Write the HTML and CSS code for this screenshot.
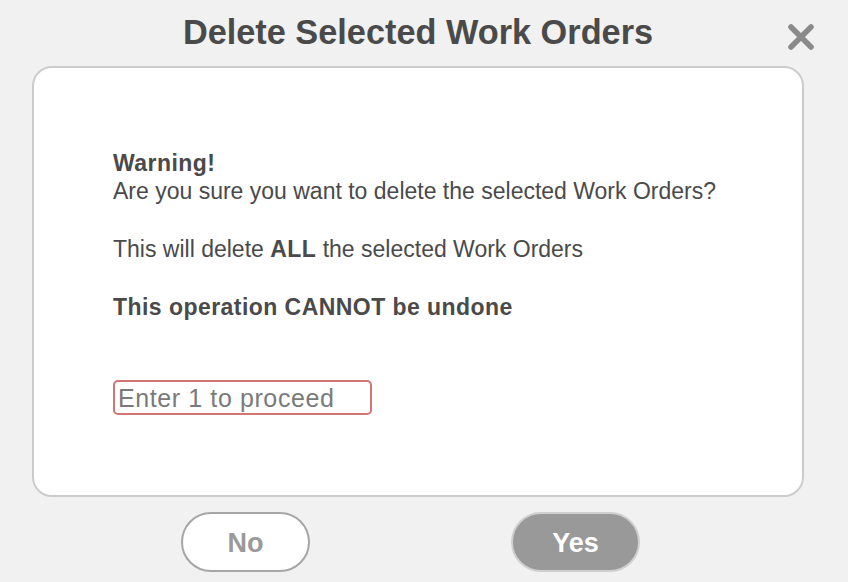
FILE: index.html
```html
<!DOCTYPE html>
<html lang="en">
<head>
  <meta charset="UTF-8">
  <meta name="viewport" content="width=device-width, initial-scale=1.0">
  <title>Delete Selected Work Orders</title>
  <link rel="stylesheet" href="styles.css">
</head>
<body>
  <div class="modal">
    <!-- Cabecera -->
    <div class="modal-header">
      <h1>Delete Selected Work Orders</h1>
      <button type="button" class="close" aria-label="Close">
        <svg width="30" height="30" viewBox="0 0 30 30">
          <path d="M5 5 L25 25 M25 5 L5 25" stroke="#8a8a8a" stroke-width="5.5" stroke-linecap="round"/>
        </svg>
      </button>
    </div>

    <!-- Contenido -->
    <div class="modal-body">
      <p class="warning"><strong>Warning!</strong><br>Are you sure you want to delete the selected Work Orders?</p>
      <p>This will delete <strong>ALL</strong> the selected Work Orders</p>
      <p><strong>This operation CANNOT be undone</strong></p>
      <input type="text" class="confirm-input" placeholder="Enter 1 to proceed">
    </div>

    <!-- Botones -->
    <div class="modal-actions">
      <button type="button" class="btn btn-no">No</button>
      <button type="button" class="btn btn-yes">Yes</button>
    </div>
  </div>
</body>
</html>
```

FILE: styles.css
```css
body {
  margin: 0;
  padding: 0;
  background-color: #f1f1f1;
  font-family: "Liberation Sans", Arial, sans-serif;
  color: #4a4a4a;
}

.modal {
  width: 772px;
  margin-left: 32px;
}

.modal-header {
  position: relative;
  height: 66px;
}

.modal-header h1 {
  margin: 0;
  padding-top: 12px;
  text-align: center;
  font-size: 34.3px;
  line-height: 40px;
  font-weight: bold;
  color: #4a4a4a;
}

.close {
  position: absolute;
  top: 22px;
  right: -12px;
  padding: 0;
  border: none;
  background: none;
  cursor: pointer;
}

.modal-body {
  height: 431px;
  box-sizing: border-box;
  padding: 81px 79px 0;
  background-color: #fff;
  border: 2px solid #cccccc;
  border-radius: 20px;
  font-size: 23px;
  line-height: 28px;
}

.modal-body p {
  margin: 0 0 30px;
}

.modal-body strong {
  color: #4a4a4a;
  letter-spacing: 0.45px;
}

.confirm-input {
  display: block;
  margin-top: 59px;
  width: 259px;
  height: 35px;
  box-sizing: border-box;
  padding: 2px 3px 0;
  border: 2px solid #d27575;
  border-radius: 5px;
  font-family: "Liberation Sans", Arial, sans-serif;
  font-size: 25px;
  letter-spacing: 0.6px;
  color: #4a4a4a;
  outline: none;
}

.confirm-input::placeholder {
  color: #7a7a7a;
}

.modal-actions {
  display: flex;
  gap: 201px;
  padding: 15px 0 0 149px;
}

.btn {
  width: 129px;
  height: 60px;
  padding-top: 3px;
  border-radius: 30px;
  font-family: "Liberation Sans", Arial, sans-serif;
  font-size: 27px;
  font-weight: bold;
  cursor: pointer;
}

.btn-no {
  background-color: #fff;
  border: 2px solid #a6a6a6;
  color: #9a9a9a;
}

.btn-yes {
  background-color: #999999;
  border: 2px solid #cfcfcf;
  color: #fff;
}
```
